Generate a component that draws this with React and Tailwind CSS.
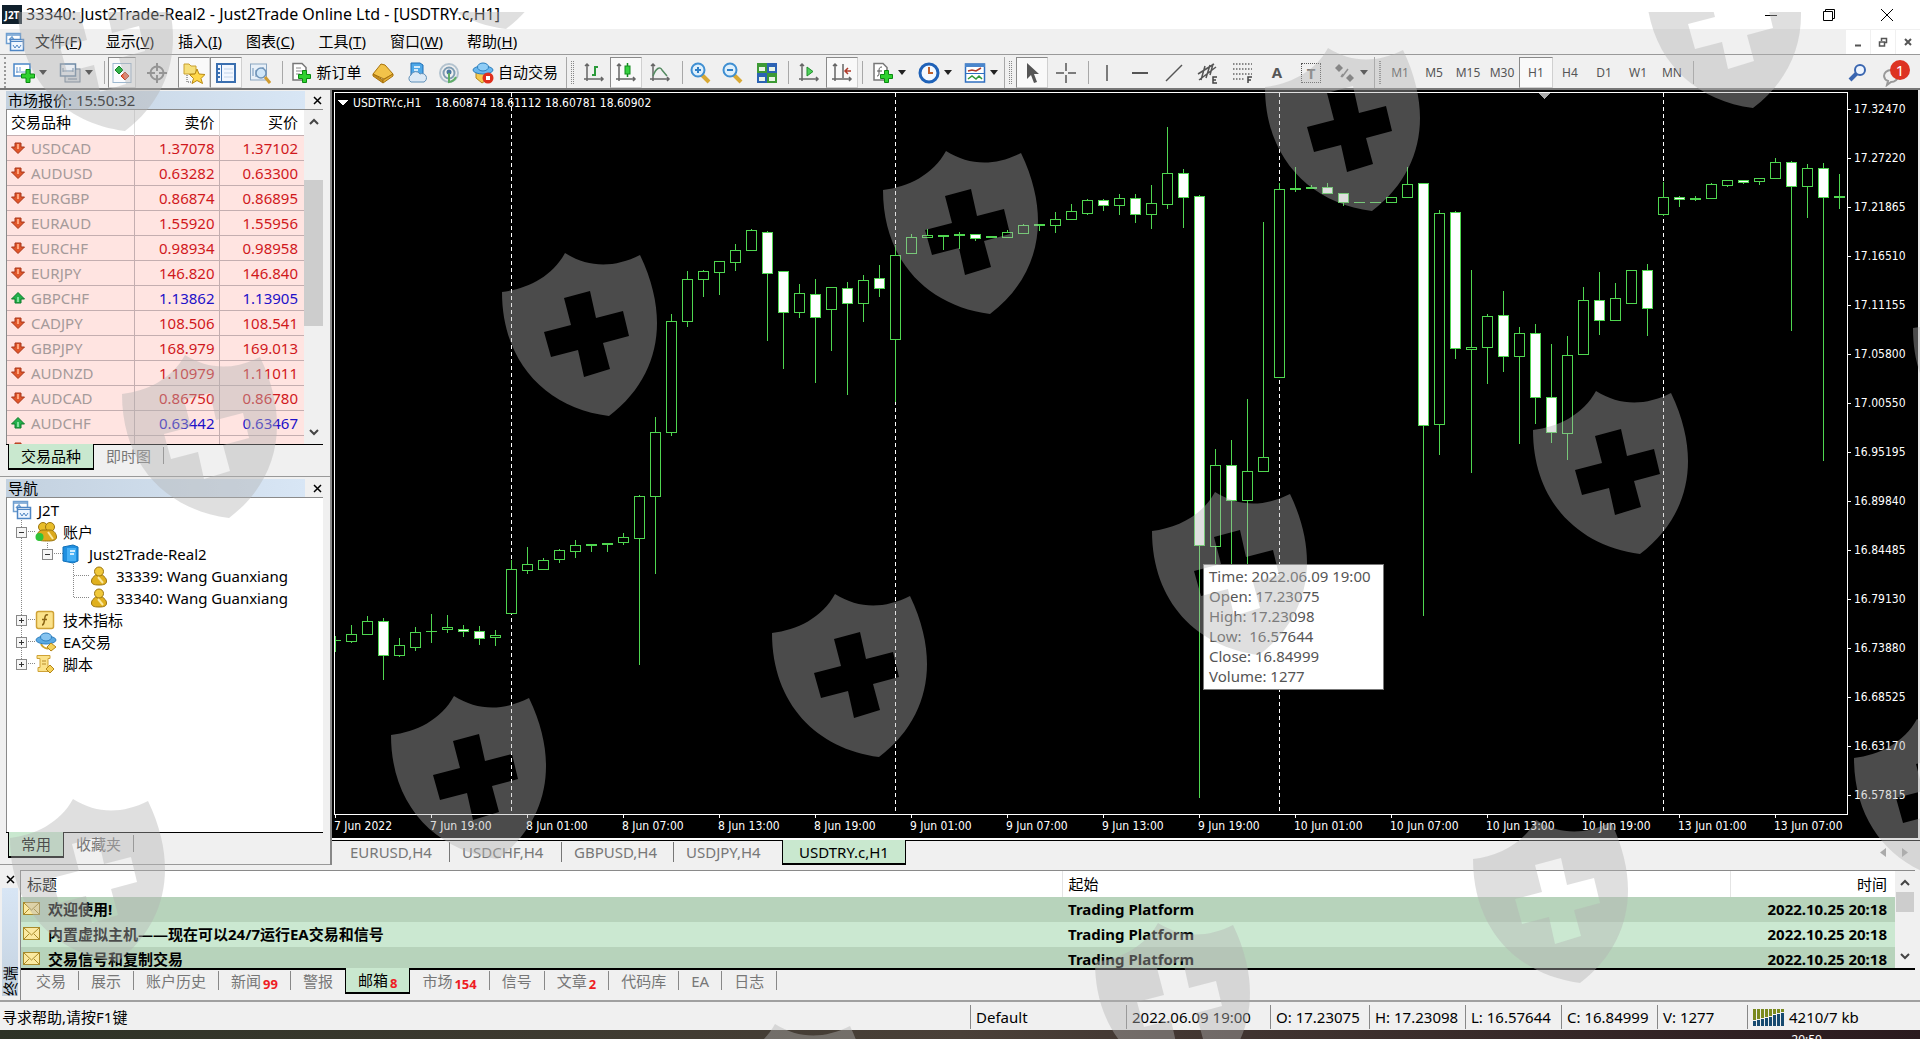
import React from 'react';
import clsx from 'clsx';

// [high, bodyTop, bodyBottom, low, kind]   h = hollow, w = filled
const CANDLES = [
  [636, 640, 640, 652, 'h'], [625, 634, 641, 643, 'h'], [616, 621, 634, 634, 'h'], [618, 621, 655, 680, 'w'],
  [638, 645, 655, 657, 'h'], [627, 632, 647, 651, 'h'], [614, 631, 631, 643, 'h'], [615, 627, 629, 633, 'h'],
  [625, 629, 631, 637, 'w'], [626, 631, 638, 645, 'w'], [630, 635, 637, 646, 'h'], [560, 569, 613, 613, 'h'],
  [547, 564, 570, 574, 'h'], [558, 560, 569, 569, 'h'], [549, 550, 559, 563, 'h'], [540, 545, 551, 558, 'h'],
  [544, 544, 545, 552, 'h'], [543, 543, 544, 552, 'h'], [533, 537, 542, 545, 'h'], [495, 496, 538, 665, 'h'],
  [417, 432, 496, 574, 'h'], [314, 321, 432, 436, 'h'], [271, 279, 321, 327, 'h'], [270, 271, 279, 297, 'h'],
  [261, 261, 272, 295, 'h'], [244, 250, 262, 271, 'h'], [229, 230, 250, 250, 'h'], [231, 232, 273, 341, 'w'],
  [271, 271, 312, 369, 'w'], [284, 293, 312, 318, 'h'], [279, 294, 317, 383, 'w'], [287, 287, 309, 351, 'h'],
  [282, 288, 303, 395, 'w'], [275, 280, 303, 322, 'h'], [265, 278, 288, 297, 'w'], [245, 255, 339, 402, 'h'],
  [234, 237, 253, 253, 'h'], [229, 235, 237, 237, 'h'], [235, 235, 236, 250, 'h'], [232, 234, 235, 249, 'h'],
  [234, 234, 238, 241, 'w'], [236, 236, 237, 237, 'h'], [230, 232, 237, 238, 'h'], [224, 225, 233, 234, 'h'],
  [224, 224, 225, 231, 'h'], [212, 219, 225, 233, 'h'], [204, 211, 219, 220, 'h'], [199, 200, 213, 215, 'h'],
  [199, 200, 205, 211, 'w'], [194, 198, 205, 215, 'h'], [194, 198, 214, 223, 'w'], [185, 203, 214, 229, 'h'],
  [127, 173, 204, 209, 'h'], [169, 173, 197, 228, 'w'], [195, 196, 545, 798, 'w'], [449, 465, 546, 580, 'h'],
  [440, 465, 500, 580, 'w'], [399, 471, 500, 580, 'h'], [222, 457, 471, 471, 'h'], [183, 189, 377, 377, 'h'],
  [167, 188, 189, 192, 'h'], [185, 187, 188, 188, 'h'], [183, 187, 193, 194, 'w'], [193, 193, 202, 206, 'w'],
  [202, 202, 202, 202, 'h'], [202, 202, 202, 202, 'h'], [197, 197, 202, 202, 'h'], [167, 184, 197, 197, 'h'],
  [183, 183, 425, 616, 'w'], [210, 213, 424, 455, 'h'], [211, 212, 348, 359, 'w'], [270, 347, 349, 473, 'h'],
  [314, 316, 347, 384, 'h'], [291, 315, 356, 372, 'w'], [327, 333, 356, 444, 'h'], [324, 333, 397, 424, 'w'],
  [344, 397, 432, 443, 'w'], [336, 355, 433, 460, 'h'], [287, 300, 354, 354, 'h'], [272, 300, 320, 335, 'w'],
  [283, 298, 320, 321, 'h'], [270, 270, 303, 303, 'h'], [264, 270, 308, 336, 'w'], [182, 197, 214, 216, 'h'],
  [196, 197, 199, 207, 'w'], [196, 198, 199, 201, 'h'], [183, 184, 198, 198, 'h'], [180, 180, 185, 187, 'h'],
  [180, 180, 182, 184, 'w'], [178, 178, 181, 185, 'h'], [158, 162, 178, 178, 'h'], [161, 162, 186, 331, 'w'],
  [164, 168, 186, 218, 'h'], [163, 168, 197, 461, 'w'], [174, 196, 197, 209, 'h'],
];
const DAY_BREAKS = [11, 35, 59, 83];
const STEP = 16;
const TOP = 93;

const PRICES = [
  '17.32470', '17.27220', '17.21865', '17.16510', '17.11155', '17.05800', '17.00550', '16.95195',
  '16.89840', '16.84485', '16.79130', '16.73880', '16.68525', '16.63170', '16.57815',
];
const TIMES = [
  '7 Jun 2022', '7 Jun 19:00', '8 Jun 01:00', '8 Jun 07:00', '8 Jun 13:00', '8 Jun 19:00', '9 Jun 01:00', '9 Jun 07:00',
  '9 Jun 13:00', '9 Jun 19:00', '10 Jun 01:00', '10 Jun 07:00', '10 Jun 13:00', '10 Jun 19:00', '13 Jun 01:00', '13 Jun 07:00',
];

const QUOTES = [
  ['USDCAD', '1.37078', '1.37102'],
  ['AUDUSD', '0.63282', '0.63300'],
  ['EURGBP', '0.86874', '0.86895'],
  ['EURAUD', '1.55920', '1.55956'],
  ['EURCHF', '0.98934', '0.98958'],
  ['EURJPY', '146.820', '146.840'],
  ['GBPCHF', '1.13862', '1.13905', true],
  ['CADJPY', '108.506', '108.541'],
  ['GBPJPY', '168.979', '169.013'],
  ['AUDNZD', '1.10979', '1.11011'],
  ['AUDCAD', '0.86750', '0.86780'],
  ['AUDCHF', '0.63442', '0.63467', true],
  ['AUDJPY', '94.443', '94.476'],
];

const MENUS = [['文件', 'F'], ['显示', 'V'], ['插入', 'I'], ['图表', 'C'], ['工具', 'T'], ['窗口', 'W'], ['帮助', 'H']];

const CHART_TABS = ['EURUSD,H4', 'USDCHF,H4', 'GBPUSD,H4', 'USDJPY,H4'];

const MAILS = ['欢迎使用!', '内置虚拟主机——现在可以24/7运行EA交易和信号', '交易信号和复制交易'];

const TERMINAL_TABS = [
  ['交易'], ['展示'], ['账户历史'], ['新闻', 99], ['警报'], ['邮箱', 8], ['市场', 154], ['信号'], ['文章', 2], ['代码库'], ['EA'], ['日志'],
];

const SHIELDS = [
  [18, -32], [399, -134], [1646, -55], [1265, 48], [883, 151], [502, 253], [122, 355], [1533, 391], [1913, 289],
  [1152, 492], [772, 594], [391, 696], [10, 799], [1854, 719], [1473, 820], [1095, 923], [712, 1024],
];

/* ---------- icons ---------- */

function Svg({ w = 22, h = 22, children }) {
  return (
    <svg width={w} height={h} viewBox={`0 0 ${w} ${h}`} fill="none" className="shrink-0" aria-hidden="true">
      {children}
    </svg>
  );
}

function Plus() {
  return (
    <path
      transform="translate(8 8)"
      d="M4.5.5h4v4h4v4h-4v4h-4v-4h-4v-4h4z"
      fill="#2fd12f"
      stroke="#0b8a12"
    />
  );
}

function Caret() {
  return (
    <svg width="8" height="5" viewBox="0 0 8 5" className="shrink-0" aria-hidden="true">
      <path d="M0 0h8L4 5z" fill="#222" />
    </svg>
  );
}

function Axes() {
  return <path d="M4 2v17M1 17h19M2 4l2-2 2 2M18 15l2 2-2 2" stroke="#666" strokeWidth="1.5" />;
}

function WindowsIcon() {
  return (
    <Svg w={20} h={20}>
      <rect x="1.5" y="1.5" width="14" height="10" fill="#fff" stroke="#6f9fd0" strokeWidth="1.5" />
      <path d="M1 3h15M4 8l3-3 2 3" stroke="#6f9fd0" strokeWidth="1.5" />
      <rect x="5.5" y="7.5" width="13" height="11" fill="#eef6ff" stroke="#4f86c4" strokeWidth="1.5" />
      <path d="M5 9.5h14M8 13l2 3 2-3 2 3 2-3" stroke="#4f86c4" />
    </Svg>
  );
}

const Icons = {
  newChart: (
    <Svg>
      <rect x="1" y="2" width="16" height="12" fill="#fff" stroke="#4a86c8" strokeWidth="1.5" />
      <path d="M4 5v6M3 10h10M7 5v4" stroke="#6a9bd0" />
      <path d="M13 7.5h4v4.500h4.500v4H17v4.500h-4V16H8.500v-4H13z" fill="#2fd12f" stroke="#0b8a12" />
    </Svg>
  ),
  profiles: (
    <Svg>
      <rect x="6" y="7" width="15" height="13" fill="#d7dce2" stroke="#6d7f92" />
      <rect x="1.5" y="2" width="15" height="12" fill="#e9edf2" stroke="#6f8aa6" strokeWidth="1.5" />
      <path d="M4 9h10M4 6v4M14 6v4" stroke="#7d93aa" />
      <path d="M9 17h9" stroke="#6d7f92" />
    </Svg>
  ),
  market: (
    <Svg>
      <rect x="2" y="1.5" width="18" height="19" fill="#fafcff" stroke="#9db8d0" />
      <path d="M8 4l4 4-4 4-4-4z" fill="#33b44a" stroke="#15802a" />
      <path d="M14 10l4 4-4 4-4-4z" fill="#ef6a4a" stroke="#c03a20" />
    </Svg>
  ),
  dataWindow: (
    <Svg>
      <circle cx="11" cy="11" r="6.5" stroke="#808080" strokeWidth="2" />
      <path d="M11 1v8M11 13v8M1 11h8M13 11h8" stroke="#808080" strokeWidth="2" />
    </Svg>
  ),
  navigator: (
    <Svg>
      <path d="M1 2h5l2 2h5v8H1z" fill="#f6df7a" stroke="#c8a030" />
      <path d="M4 13v7h6" stroke="#555" strokeDasharray="1 1" />
      <path d="M14 7l2 5 6 .5-4 4 1.5 5-5.500-3-5 3 1.500-5-4-4 5.500-.5z" fill="#ffd84a" stroke="#b98a12" />
    </Svg>
  ),
  terminal: (
    <Svg>
      <rect x="2" y="2" width="18" height="18" fill="#f2f7ff" stroke="#3a6fb0" strokeWidth="2" />
      <path d="M6.5 3v16" stroke="#3a6fb0" />
      <path d="M3 7h2M3 11h2M3 15h2" stroke="#3a6fb0" strokeWidth="2" />
      <path d="M9 7h9M9 11h9M9 15h9" stroke="#c3d4ea" />
    </Svg>
  ),
  tester: (
    <Svg>
      <rect x="1.5" y="2" width="16" height="16" fill="#e8f0f8" stroke="#8aa5c0" />
      <path d="M4 14V6M7 15V8M14 12V5" stroke="#6f93b8" />
      <circle cx="12" cy="11" r="5" fill="#cfe6f8" stroke="#6f93b8" strokeWidth="1.5" />
      <path d="M16 15l5 6" stroke="#cf9b30" strokeWidth="3" />
    </Svg>
  ),
  order: (
    <Svg>
      <path d="M3 1.5h9l4 4V18H3z" fill="#fff" stroke="#777" strokeWidth="1.5" />
      <path d="M6 6h5M6 9h7M6 12h4" stroke="#888" />
      <Plus />
    </Svg>
  ),
  metaEditor: (
    <Svg>
      <path d="M1 12L9 2l4 1 8 9-9 5z" fill="#f2c34a" stroke="#a8730c" />
      <path d="M1 12l10 6v3L1 14z" fill="#c98f1e" stroke="#a8730c" />
      <path d="M11 18l10-6v2l-10 7z" fill="#e5b03a" stroke="#a8730c" />
    </Svg>
  ),
  vps: (
    <Svg>
      <path d="M5 1h9l3 2v10H5z" fill="#4fa8e8" stroke="#1f6fb5" />
      <path d="M8 5h6M8 8h4" stroke="#fff" strokeWidth="1.5" />
      <path d="M5 20a4 4 0 010-7 5 5 0 019-1 4 4 0 014 8z" fill="#dce9f5" stroke="#5f8fb8" />
    </Svg>
  ),
  signals: (
    <Svg>
      <circle cx="11" cy="11" r="9" stroke="#b3c3cf" strokeWidth="2" />
      <circle cx="11" cy="11" r="5.5" stroke="#7f9db3" strokeWidth="2" />
      <circle cx="11" cy="10" r="2.5" fill="#4a78a0" />
      <path d="M11 11v9a9 9 0 007-5" stroke="#5fae68" strokeWidth="2" />
    </Svg>
  ),
  expert: (
    <Svg>
      <path d="M4 10h14l-2 7-6 4-6-5z" fill="#f4c94e" stroke="#b5861a" />
      <ellipse cx="11" cy="8" rx="10" ry="4" fill="#6ab7ee" stroke="#2b7fbe" />
      <ellipse cx="11" cy="5" rx="5.5" ry="4" fill="#8fcdf6" stroke="#2b7fbe" />
      <circle cx="16" cy="16" r="5.5" fill="#e0301e" />
      <rect x="14" y="14" width="4" height="4" fill="#fff" />
    </Svg>
  ),
  bars: (
    <Svg>
      <Axes />
      <path d="M12 4v10M12 5h3M9 13h3" stroke="#2b9a3a" strokeWidth="2" />
    </Svg>
  ),
  candles: (
    <Svg>
      <Axes />
      <path d="M12.5 1v14" stroke="#128a1e" strokeWidth="1.5" />
      <rect x="10" y="4" width="5" height="8" fill="#35d13f" stroke="#128a1e" />
    </Svg>
  ),
  line: (
    <Svg>
      <Axes />
      <path d="M4 14c3-8 7-10 9-6l5 6" stroke="#558b62" strokeWidth="1.5" />
    </Svg>
  ),
  zoomIn: (
    <Svg>
      <path d="M13 13l7 7" stroke="#d9a934" strokeWidth="4" />
      <circle cx="9" cy="8" r="6.5" fill="#dff0fc" stroke="#3f8fd2" strokeWidth="2" />
      <path d="M9 5v6M6 8h6" stroke="#2f7fc6" strokeWidth="2" />
    </Svg>
  ),
  zoomOut: (
    <Svg>
      <path d="M13 13l7 7" stroke="#d9a934" strokeWidth="4" />
      <circle cx="9" cy="8" r="6.5" fill="#dff0fc" stroke="#3f8fd2" strokeWidth="2" />
      <path d="M6 8h6" stroke="#2f7fc6" strokeWidth="2" />
    </Svg>
  ),
  tile: (
    <Svg>
      <rect x="1" y="1" width="10" height="10" fill="#3d9a35" />
      <rect x="11" y="1" width="10" height="10" fill="#2c63b4" />
      <rect x="1" y="11" width="10" height="10" fill="#2c63b4" />
      <rect x="11" y="11" width="10" height="10" fill="#3d9a35" />
      <path d="M3 5h6v4H3zM13 5h6v4h-6zM3 15h6v4H3zM13 15h6v4h-6z" fill="#e9f4e6" />
    </Svg>
  ),
  autoScroll: (
    <Svg>
      <Axes />
      <path d="M9 5l6 4.500L9 14z" fill="#4fd05a" stroke="#1e8f2b" />
    </Svg>
  ),
  shift: (
    <Svg>
      <Axes />
      <path d="M12 2v14" stroke="#666" strokeWidth="1.5" />
      <path d="M20 9h-6M17 6l-3 3 3 3" stroke="#b03a2a" strokeWidth="1.5" />
    </Svg>
  ),
  indicators: (
    <Svg>
      <path d="M2 1.5h9l4 4V18H2z" fill="#fff" stroke="#777" strokeWidth="1.5" />
      <path d="M10 5c-3 0-3 2-3 5s0 4-2 4M5 9h5" stroke="#555" />
      <Plus />
    </Svg>
  ),
  clock: (
    <Svg>
      <circle cx="11" cy="11" r="9" fill="#f4f9ff" stroke="#1f62b8" strokeWidth="3" />
      <path d="M11 5v6h4" stroke="#c0602a" strokeWidth="2" />
    </Svg>
  ),
  templates: (
    <Svg>
      <rect x="1.5" y="2" width="19" height="18" fill="#fff" stroke="#2f6fc0" strokeWidth="1.5" />
      <path d="M1 3.5h20" stroke="#4a86cc" strokeWidth="3" />
      <path d="M4 9l4-1 4 1 5-3" stroke="#b03a2a" strokeWidth="1.5" />
      <path d="M2 11.5h18" stroke="#2f6fc0" />
      <path d="M4 17l4-3 4 3 3-3 3 3" stroke="#2f9a3a" strokeWidth="1.5" />
    </Svg>
  ),
  cursor: (
    <Svg>
      <path d="M6 1v16l4-4 3 8 3-1-3-8h5z" fill="#555" />
    </Svg>
  ),
  crosshair: (
    <Svg>
      <path d="M11 1v8M11 13v8M1 11h8M13 11h8" stroke="#555" strokeWidth="1.5" />
    </Svg>
  ),
  vline: <Svg><path d="M11 3v16" stroke="#555" strokeWidth="1.5" /></Svg>,
  hline: <Svg><path d="M3 11h16" stroke="#555" strokeWidth="2" /></Svg>,
  trend: <Svg><path d="M3 19L19 3" stroke="#555" strokeWidth="1.5" /></Svg>,
  channel: (
    <Svg>
      <path d="M1 12L17 2M2 18L19 5M4 18l4-14M9 16l4-13M13 13l3-11" stroke="#555" strokeWidth="1.5" />
      <path d="M20 15h-4v6h4M16 18h3" stroke="#444" strokeWidth="1.5" />
    </Svg>
  ),
  fibo: (
    <Svg>
      <path d="M1 2h19M1 7h19M1 12h19M1 17h11" stroke="#666" strokeWidth="1.5" strokeDasharray="1.5 1.5" />
      <path d="M20 15h-4v6M16 18h3" stroke="#444" strokeWidth="1.5" />
    </Svg>
  ),
  arrows: (
    <Svg>
      <path d="M5 2l4 4-4 4-4-4zM16 12l4 4-4 4-4-4z" fill="#666" />
      <path d="M8 15l6-8M9 12l-2 3" stroke="#777" strokeWidth="1.5" />
    </Svg>
  ),
};

function QuoteArrow({ up }) {
  return (
    <svg width="14" height="14" viewBox="0 0 14 14" className={clsx('shrink-0', up && 'rotate-180')} aria-hidden="true">
      <path
        d="M4 2h6v4h3.500L7 12.500.5 6H4z"
        fill={up ? '#22b04a' : '#e0562a'}
        stroke={up ? '#0c7a2a' : '#a8371a'}
      />
      <path d="M6 3h2v5H6z" fill={up ? '#7fe09a' : '#ffa47c'} />
    </svg>
  );
}

function Person() {
  return (
    <Svg w={18} h={20}>
      <path d="M1.5 15c0-3 2-4 4-6h7c2 2 4 3 4 6s-2 4-7.500 4-7.500-1-7.500-4z" fill="#e0b01e" stroke="#9a7410" />
      <circle cx="9" cy="5.5" r="4.5" fill="#f0c83a" stroke="#9a7410" />
      <path d="M8 11l5 6" stroke="#fbe9a0" strokeWidth="2" />
    </Svg>
  );
}

function People() {
  return (
    <Svg w={22} h={20}>
      <circle cx="8" cy="5" r="4.5" fill="#e8bd2a" stroke="#9a7410" />
      <circle cx="15" cy="5" r="4.5" fill="#e8bd2a" stroke="#9a7410" />
      <path d="M2 16c0-5 2-8 6-8h7c4 0 6.500 4 6.500 7s-3 4-8 4-11.500 0-11.500-3z" fill="#dca91c" stroke="#9a7410" />
      <path d="M13 10l5 7" stroke="#fbe9a0" strokeWidth="2" />
      <circle cx="4.5" cy="15" r="4" fill="#2fc43a" />
    </Svg>
  );
}

function Server() {
  return (
    <Svg w={18} h={20}>
      <path d="M1 3l10-2 5 2v14l-5 2-10-2z" fill="#1f8fe0" stroke="#1070b8" />
      <path d="M5 4h9v13H5z" fill="#46b0f5" />
      <path d="M8 7h5M8 10h4" stroke="#fff" strokeWidth="1.5" />
    </Svg>
  );
}

function FuncIcon() {
  return (
    <Svg w={20} h={20}>
      <rect x="1.5" y="1.5" width="17" height="17" rx="2" fill="#fbe28a" stroke="#cfa236" strokeWidth="1.5" />
      <path d="M13 5c-3-1-3 2-3.500 5S9 15 7 15M7 9.500h5" stroke="#8a6414" strokeWidth="1.5" />
    </Svg>
  );
}

function HatIcon() {
  return (
    <Svg w={22} h={20}>
      <path d="M6 12c2 4 6 5 9 4" stroke="#d0a22c" strokeWidth="2" />
      <ellipse cx="11" cy="8" rx="10" ry="4" fill="#5aa9e2" stroke="#2f7fbe" />
      <ellipse cx="11" cy="5" rx="5.5" ry="4" fill="#86c4f0" stroke="#2f7fbe" />
      <path d="M16 11l5 4-5 4-4-4z" fill="#f5d25a" stroke="#b5861a" />
    </Svg>
  );
}

function ScriptIcon() {
  return (
    <Svg w={20} h={20}>
      <path d="M2 1.500h13v3h-2v9h2v4H3v-4h2v-9H2z" fill="#fbe28a" stroke="#cfa236" />
      <path d="M7 7h4M7 10h4" stroke="#b58a2a" />
      <path d="M15 11l4 4-4 4-4-4z" fill="#f5d25a" stroke="#b5861a" />
    </Svg>
  );
}

function Envelope() {
  return (
    <Svg w={17} h={13}>
      <rect x=".5" y=".5" width="16" height="12" fill="#fbe9a0" stroke="#a88a2a" />
      <path d="M1 1l7.500 7L16 1M1 12l5-5M16 12l-5-5" stroke="#a88a2a" />
    </Svg>
  );
}

function Cross() {
  return (
    <svg width="9" height="9" viewBox="0 0 9 9" aria-hidden="true">
      <path d="M1 1l7 7M8 1L1 8" stroke="#000" strokeWidth="1.5" />
    </svg>
  );
}

/* ---------- toolbar ---------- */

function Sep() {
  return (
    <span className="flex w-2 justify-center self-stretch py-1">
      <span className="w-px bg-[#a8a8a8]" />
    </span>
  );
}

function Grip({ className }) {
  return (
    <span className={clsx('flex items-stretch justify-between self-stretch border-l border-[#a8a8a8] px-1 py-1', className)}>
      <span className="w-1 border-x border-dotted border-[#888]" />
    </span>
  );
}

function ToolButton({ label, pressed, className, children }) {
  return (
    <button
      type="button"
      aria-label={label}
      className={clsx(
        'flex h-[31px] shrink-0 items-center justify-center gap-1 text-[15px]',
        pressed && 'border border-[#d0d0d0] border-t-[#8a8a8a] border-l-[#8a8a8a] bg-[#f9f9f9]',
        className
      )}
    >
      {children}
    </button>
  );
}

function Toolbar() {
  return (
    <div className="flex h-9 shrink-0 items-center overflow-hidden border-t border-b-2 border-t-[#9a9a9a] border-b-[#777] bg-[#f0f0f0] pt-0.5">
      <span className="ml-1 w-1 self-stretch border-l-2 border-dotted border-[#999]" />
      <ToolButton label="新图表" className="w-11">{Icons.newChart}<Caret /></ToolButton>
      <ToolButton label="配置文件" className="w-12">{Icons.profiles}<Caret /></ToolButton>
      <Sep />
      <ToolButton label="市场报价" pressed className="w-7">{Icons.market}</ToolButton>
      <ToolButton label="数据窗口" className="w-[42px]">{Icons.dataWindow}</ToolButton>
      <ToolButton label="导航" pressed className="w-8">{Icons.navigator}</ToolButton>
      <ToolButton label="终端" pressed className="w-8">{Icons.terminal}</ToolButton>
      <ToolButton label="策略测试" className="w-9">{Icons.tester}</ToolButton>
      <Sep />
      <ToolButton label="新订单" className="w-20">{Icons.order}新订单</ToolButton>
      <ToolButton label="编辑器" className="w-[34px]">{Icons.metaEditor}</ToolButton>
      <ToolButton label="VPS" className="w-[34px]">{Icons.vps}</ToolButton>
      <ToolButton label="信号" className="w-[30px]">{Icons.signals}</ToolButton>
      <ToolButton label="自动交易" className="w-[102px]">{Icons.expert}自动交易</ToolButton>
      <Grip className="w-3" />
      <ToolButton label="柱状图" className="w-8">{Icons.bars}</ToolButton>
      <ToolButton label="蜡烛图" pressed className="w-8">{Icons.candles}</ToolButton>
      <ToolButton label="线图" className="w-9">{Icons.line}</ToolButton>
      <Sep />
      <ToolButton label="放大" className="w-7">{Icons.zoomIn}</ToolButton>
      <ToolButton label="缩小" className="w-9">{Icons.zoomOut}</ToolButton>
      <ToolButton label="平铺" className="w-[34px]">{Icons.tile}</ToolButton>
      <Sep />
      <ToolButton label="自动滚动" className="w-[34px]">{Icons.autoScroll}</ToolButton>
      <ToolButton label="图表平移" pressed className="w-8">{Icons.shift}</ToolButton>
      <Sep />
      <ToolButton label="技术指标" className="w-[46px]">{Icons.indicators}<Caret /></ToolButton>
      <ToolButton label="周期" className="w-[46px]">{Icons.clock}<Caret /></ToolButton>
      <ToolButton label="模板" className="w-[46px]">{Icons.templates}<Caret /></ToolButton>
      <Grip className="w-3" />
      <ToolButton label="光标" pressed className="w-8">{Icons.cursor}</ToolButton>
      <ToolButton label="十字线" className="w-9">{Icons.crosshair}</ToolButton>
      <Sep />
      <ToolButton label="垂直线" className="w-[30px]">{Icons.vline}</ToolButton>
      <ToolButton label="水平线" className="w-9">{Icons.hline}</ToolButton>
      <ToolButton label="趋势线" className="w-8">{Icons.trend}</ToolButton>
      <ToolButton label="通道" className="w-9">{Icons.channel}</ToolButton>
      <ToolButton label="斐波那契" className="w-[34px]">{Icons.fibo}</ToolButton>
      <ToolButton label="文字" className="w-[34px] font-bold text-[#555]">A</ToolButton>
      <ToolButton label="文字标签" className="w-[34px]">
        <span className="h-5 w-5 border border-dotted border-[#555] text-center leading-[18px] font-bold text-[#777]">T</span>
      </ToolButton>
      <ToolButton label="箭头" className="w-[46px]">{Icons.arrows}<Caret /></ToolButton>
      <Grip className="w-2" />
      {['M1', 'M5', 'M15', 'M30', 'H1', 'H4', 'D1', 'W1', 'MN'].map((tf) => (
        <button
          key={tf}
          type="button"
          className={clsx(
            'h-[31px] w-[34px] shrink-0 text-xs text-[#555]',
            tf === 'H1' && 'border border-[#d0d0d0] border-t-[#8a8a8a] border-l-[#8a8a8a] bg-[#f9f9f9]'
          )}
        >
          {tf}
        </button>
      ))}
      <Sep />
      <div className="ml-auto flex items-center gap-3 pr-2">
        <button type="button" aria-label="搜索">
          <Svg>
            <path d="M11 11l-7 7" stroke="#3a66b0" strokeWidth="4" />
            <circle cx="14" cy="8" r="5" fill="#eef5ff" stroke="#3a66b0" strokeWidth="2" />
          </Svg>
        </button>
        <button type="button" aria-label="通知" className="relative h-7 w-8">
          <svg width="32" height="28" viewBox="0 0 32 28" fill="none" aria-hidden="true">
            <path d="M4 17a7 6 0 117 6l-4 3 1-4a6 6 0 01-4-5z" stroke="#999" strokeWidth="2" />
            <circle cx="20" cy="11" r="10" fill="#dd3322" />
          </svg>
          <span className="absolute top-0 right-0 w-6 text-center text-[15px] leading-[22px] text-white">1</span>
        </button>
      </div>
    </div>
  );
}

/* ---------- left panels ---------- */

function PanelHeader({ title }) {
  return (
    <div className="flex h-[18px] items-center justify-between">
      <div className="h-full flex-1 bg-linear-to-r from-[#c3d1df] to-[#d8e6f5] pl-0.5 text-[15px] leading-[18px]">{title}</div>
      <button type="button" aria-label="关闭" className="ml-1.5 flex w-3 justify-center">
        <Cross />
      </button>
    </div>
  );
}

function PanelTabs({ active, other }) {
  return (
    <div className="flex h-[26px] border-t border-black pl-0.5">
      <button type="button" className="-mt-px h-[26px] border border-t-0 border-b-2 border-black bg-[#c9e8cf] px-3 text-[15px] leading-[22px]">{active}</button>
      <button type="button" className="mt-0.5 mb-1.5 border-r border-[#888] px-3 text-[15px] leading-4 text-[#777]">{other}</button>
    </div>
  );
}

function Chevron({ down }) {
  return (
    <svg width="10" height="7" viewBox="0 0 10 7" fill="none" className={clsx('shrink-0', down && 'rotate-180')} aria-hidden="true">
      <path d="M1 6l4-4 4 4" stroke="#444" strokeWidth="2" />
    </svg>
  );
}

function MarketWatch() {
  return (
    <section className="flex flex-col border-b border-[#999] pt-px pr-[7px] pb-1.5 pl-1.5">
      <PanelHeader title="市场报价: 15:50:32" />
      <div className="flex h-[335px] overflow-hidden border-t border-l border-[#8a8a8a] bg-white">
        <div className="flex-1 overflow-hidden">
          <table className="w-full table-fixed border-collapse text-[15px]">
            <thead>
              <tr className="h-[25px]">
                <th className="w-[127px] border-r border-[#ddd] pl-1 text-left leading-5 font-normal">交易品种</th>
                <th className="border-r border-[#ddd] pr-1 text-right leading-5 font-normal">卖价</th>
                <th className="pr-1.5 text-right leading-5 font-normal">买价</th>
              </tr>
            </thead>
            <tbody>
              {QUOTES.map(([name, bid, ask, up]) => (
                <tr key={name} className="h-[25px] border-t border-[#c4aeb0] bg-[#ffe4e1]">
                  <td className="border-r border-[#c4aeb0] pl-1 leading-5">
                    <span className="flex items-center gap-1.5 text-[#a59a9a]"><QuoteArrow up={up} />{name}</span>
                  </td>
                  <td className={clsx('border-r border-[#c4aeb0] pr-1 text-right leading-5', up ? 'text-[#2210c8]' : 'text-[#d0181c]')}>{bid}</td>
                  <td className={clsx('pr-1.5 text-right leading-5', up ? 'text-[#2210c8]' : 'text-[#d0181c]')}>{ask}</td>
                </tr>
              ))}
            </tbody>
          </table>
        </div>
        <div className="flex w-[19px] flex-col items-center justify-between bg-[#f0f0f0] py-2">
          <Chevron />
          <span className="mt-[55px] mb-auto h-[146px] w-full bg-[#cdcdcd]" />
          <Chevron down />
        </div>
      </div>
      <PanelTabs active="交易品种" other="即时图" />
    </section>
  );
}

function Expander({ open }) {
  return (
    <svg width="11" height="11" viewBox="0 0 11 11" className="shrink-0" aria-hidden="true">
      <rect x=".5" y=".5" width="10" height="10" fill="#f6f6f6" stroke="#888" />
      <path d={open ? 'M3 5.500h5' : 'M3 5.500h5M5.500 3v5'} stroke="#333" />
    </svg>
  );
}

function Navigator() {
  return (
    <section className="mt-0.5 flex flex-1 flex-col border-b border-[#999] pr-[7px] pb-1.5 pl-1.5">
      <PanelHeader title="导航" />
      <div className="relative flex-1 border-t border-l border-[#8a8a8a] bg-white text-[15px]">
        <svg width="110" height="180" className="absolute top-0 left-0" aria-hidden="true">
          <path
            d="M14.500 20v146M15 33.500h14M40.500 45v11M41 55.500h16M66.500 66v33M67 77.500h16M67 99.500h16M15 121.500h14M15 143.500h14M15 165.500h14"
            stroke="#888"
            fill="none"
            strokeDasharray="1 1"
          />
        </svg>
        <ul className="relative pt-px leading-[22px]">
          <li className="flex h-[22px] items-center gap-1.5 pl-[5px]"><WindowsIcon />J2T</li>
          <li className="flex h-[22px] items-center pl-[9px]"><Expander open /><span className="mr-1.5 ml-2"><People /></span>账户</li>
          <li className="flex h-[22px] items-center pl-[35px]"><Expander open /><span className="mx-[9px]"><Server /></span>Just2Trade-Real2</li>
          <li className="flex h-[22px] items-center gap-2 pl-[83px]"><Person />33339: Wang Guanxiang</li>
          <li className="flex h-[22px] items-center gap-2 pl-[83px]"><Person />33340: Wang Guanxiang</li>
          <li className="flex h-[22px] items-center pl-[9px]"><Expander /><span className="mx-2"><FuncIcon /></span>技术指标</li>
          <li className="flex h-[22px] items-center pl-[9px]"><Expander /><span className="mr-1.5 ml-2"><HatIcon /></span>EA交易</li>
          <li className="flex h-[22px] items-center pl-[9px]"><Expander /><span className="mx-2"><ScriptIcon /></span>脚本</li>
        </ul>
      </div>
      <PanelTabs active="常用" other="收藏夹" />
    </section>
  );
}

/* ---------- chart ---------- */

function Candle({ i, data }) {
  const [high, top, bottom, low, kind] = data;
  const x = i * STEP;
  return (
    <g>
      <rect x={x} y={high - TOP} width="1" height={Math.max(low - high, 1)} fill="#4fd650" />
      {bottom - top < 2 ? (
        <rect x={x - 5} y={top - TOP} width="11" height={bottom - top + 1} fill="#4fd650" />
      ) : (
        <rect x={x - 4.5} y={top - TOP + 0.5} width="10" height={bottom - top} fill={kind === 'w' ? '#fff' : '#000'} stroke="#4fd650" />
      )}
    </g>
  );
}

function Chart() {
  return (
    <div className="flex min-h-0 flex-1 flex-col border-r-2 border-[#e8e8e8] bg-black pt-0.5 pl-0.5 font-['DejaVu_Sans_Condensed','Noto_Sans',sans-serif] text-xs text-white">
      <div className="flex min-h-0 flex-1">
        <div className="relative min-w-0 flex-1 overflow-hidden border border-white">
          <svg className="absolute inset-0 h-full w-full" shapeRendering="crispEdges" aria-hidden="true">
            {DAY_BREAKS.map((i) => (
              <line key={i} x1={i * STEP + 0.5} x2={i * STEP + 0.5} y1="0" y2="100%" stroke="#fff" strokeDasharray="4 3" />
            ))}
            {CANDLES.map((c, i) => (
              <Candle key={i} i={i} data={c} />
            ))}
            <path d="M1203 0h12l-6 6z" fill="#aaa" />
            <path d="M3 7h10l-5 6z" fill="#fff" />
          </svg>
          <div className="relative pt-px pl-[18px] leading-[18px] whitespace-pre">USDTRY.c,H1    18.60874 18.61112 18.60781 18.60902</div>
          <div className="absolute top-[471px] left-[868px] w-[181px] border border-[#777] bg-white pt-px pb-[3px] pl-[5px] font-['Noto_Sans',sans-serif] text-[15px] leading-5 whitespace-pre text-[#555]">
            <p>Time: 2022.06.09 19:00</p>
            <p>Open: 17.23075</p>
            <p>High: 17.23098</p>
            <p>Low:  16.57644</p>
            <p>Close: 16.84999</p>
            <p>Volume: 1277</p>
          </div>
        </div>
        <ul className="w-[70px] shrink-0 overflow-hidden pt-2">
          {PRICES.map((p) => (
            <li key={p} className="flex h-[49px] items-start leading-[18px]">
              <span className="mt-[9px] mr-[3px] h-px w-[3px] bg-white" />
              {p}
            </li>
          ))}
        </ul>
      </div>
      <ul className="flex h-[23px] shrink-0 overflow-hidden">
        {TIMES.map((t) => (
          <li key={t} className="w-24 shrink-0 whitespace-nowrap">
            <span className="ml-px block h-[3px] w-px bg-white" />
            <span className="block leading-4">{t}</span>
          </li>
        ))}
      </ul>
    </div>
  );
}

function ChartTabs() {
  return (
    <div className="flex h-8 shrink-0 flex-col border-t-2 border-white">
      <div className="flex h-6 border-t border-black pl-1.5">
        {CHART_TABS.map((t, i) => (
          <button
            key={t}
            type="button"
            className={clsx(
              'mt-px mb-0.5 pl-3 text-left text-[15px] leading-5 text-[#777]',
              i < CHART_TABS.length - 1 ? 'w-28 border-r border-[#777]' : 'w-27'
            )}
          >
            {t}
          </button>
        ))}
        <button type="button" className="-mt-px h-[25px] w-[124px] border border-t-0 border-b-2 border-black bg-[#c9e8cf] text-[15px] leading-5">
          USDTRY.c,H1
        </button>
        <div className="ml-auto flex items-center gap-4 pr-3">
          <svg width="6" height="9" viewBox="0 0 6 9" aria-hidden="true"><path d="M6 0v9L0 4.500z" fill="#aaa" /></svg>
          <svg width="6" height="9" viewBox="0 0 6 9" aria-hidden="true"><path d="M0 0v9l6-4.500z" fill="#aaa" /></svg>
        </div>
      </div>
    </div>
  );
}

/* ---------- bottom ---------- */

function Terminal() {
  return (
    <section className="flex h-[130px] shrink-0 pr-[5px]">
      <div className="flex w-5 shrink-0 flex-col items-center pb-1">
        <button type="button" aria-label="关闭" className="flex h-[18px] items-center">
          <Cross />
        </button>
        <div className="w-4 flex-1 rotate-180 bg-linear-to-b from-[#c3d1df] to-[#d8e6f5] text-[15px] leading-4 [text-orientation:sideways] [writing-mode:vertical-rl]">终端</div>
      </div>
      <div className="flex min-w-0 flex-1 flex-col border-t border-l border-[#8a8a8a]">
        <div className="flex h-[97px] overflow-hidden bg-white">
          <div className="min-w-0 flex-1">
            <table className="w-full table-fixed border-collapse text-[15px]">
              <thead>
                <tr className="h-[26px]">
                  <th className="border-r border-[#e4e4e4] pl-1.5 text-left leading-5 font-normal">标题</th>
                  <th className="w-[668px] border-r border-[#e4e4e4] pl-1.5 text-left leading-5 font-normal">起始</th>
                  <th className="w-[165px] pr-2 text-right leading-5 font-normal">时间</th>
                </tr>
              </thead>
              <tbody>
                {MAILS.map((m, i) => (
                  <tr key={m} className={clsx('h-[25px] font-bold', i === 1 ? 'bg-[#cbe8d1]' : 'bg-[#b7d3bb]')}>
                    <td className="pb-0.5 pl-0.5 leading-5"><span className="flex items-center gap-2"><Envelope />{m}</span></td>
                    <td className="pb-0.5 pl-1.5 leading-5">Trading Platform</td>
                    <td className="pr-2 pb-0.5 text-right leading-5 whitespace-nowrap">2022.10.25 20:18</td>
                  </tr>
                ))}
              </tbody>
            </table>
          </div>
          <div className="flex w-5 flex-col items-center justify-between bg-[#f0f0f0] py-2">
            <Chevron />
            <span className="mt-1.5 mb-auto h-5 w-[18px] shrink-0 bg-[#cdcdcd]" />
            <Chevron down />
          </div>
        </div>
        <div className="flex h-[26px] border-t-2 border-black pl-[3px]">
          {TERMINAL_TABS.map(([name, count]) => {
            const active = name === '邮箱';
            return (
              <button
                key={name}
                type="button"
                className={clsx(
                  'flex shrink-0 items-center px-3 text-[15px] leading-5',
                  active ? '-mt-0.5 h-[26px] border border-t-0 border-b-2 border-black bg-[#c9e8cf]' : 'mt-px mb-1 text-[#777]',
                  !active && name !== '警报' && 'border-r border-[#888]'
                )}
              >
                {name}
                {count && <span className="mt-1.5 ml-0.5 text-[13px] leading-4 font-bold text-[#ee1c24]">{count}</span>}
              </button>
            );
          })}
        </div>
      </div>
    </section>
  );
}

function StatusBar() {
  return (
    <footer className="flex h-[30px] shrink-0 items-center border-t-2 border-[#a0a0a0] pt-0.5 pl-0.5 text-[15px] leading-6 [&>span]:border-l [&>span]:border-[#888] [&>span]:pl-[5px]">
      <p className="flex-1">寻求帮助,请按F1键</p>
      <span className="w-[156px]">Default</span>
      <span className="w-36">2022.06.09 19:00</span>
      <span className="w-[99px]">O: 17.23075</span>
      <span className="w-24">H: 17.23098</span>
      <span className="w-24">L: 16.57644</span>
      <span className="w-24">C: 16.84999</span>
      <span className="w-[90px]">V: 1277</span>
      <span className="flex w-[173px] items-center gap-1">
        <svg width="32" height="17" viewBox="0 0 32 17" aria-hidden="true">
          {[5, 6, 7, 8, 9, 11, 12, 13].map((h, i) => (
            <g key={i}>
              <rect x={i * 4} y="0" width="3" height={16 - h} fill="#7a8a1e" />
              <rect x={i * 4} y={17 - h} width="3" height={h} fill="#174a70" />
            </g>
          ))}
        </svg>
        4210/7 kb
      </span>
    </footer>
  );
}

function Shields() {
  return (
    <div className="pointer-events-none absolute inset-x-0 top-3 bottom-0 overflow-hidden">
      <svg className="h-full w-full" aria-hidden="true">
        {SHIELDS.map(([x, y]) => (
          <path
            key={`${x}-${y}`}
            transform={`translate(${x} ${y - 12})`}
            fill="#b2b2b2"
            fillOpacity=".42"
            fillRule="evenodd"
            d="M0 39C25 36 50 24 63 0C87 15 112 15 138 2C150 27 155 50 155 70C155 105 140 138 107 163C45 155 0 110 0 39ZM62 45L88 38L94 65L121 58L127 83L101 90L108 116L82 124L76 97L49 104L42 79L69 72Z"
          />
        ))}
      </svg>
    </div>
  );
}

export default function App() {
  return (
    <div className="relative flex h-screen min-h-[700px] flex-col overflow-hidden bg-[#f0f0f0] font-['Noto_Sans','Noto_Sans_CJK_SC',sans-serif] text-black">
      <header className="flex h-[29px] shrink-0 items-center bg-white pl-0.5">
        <span className="flex h-[19px] w-5 items-center justify-center bg-[#10202c] text-[10px] leading-3 font-bold text-white">J2T</span>
        <h1 className="ml-1 flex-1 pb-0.5 text-base leading-6">33340: Just2Trade-Real2 - Just2Trade Online Ltd - [USDTRY.c,H1]</h1>
        <div className="flex pr-1 [&>button]:flex [&>button]:w-[58px] [&>button]:justify-center">
          <button type="button" aria-label="最小化"><Svg w={14} h={14}><path d="M1 7.500h12" stroke="#000" /></Svg></button>
          <button type="button" aria-label="还原"><Svg w={14} h={14}><path d="M1.500 3.500h9v9h-9zM3.500 3V1.500h9v9H11" stroke="#000" /></Svg></button>
          <button type="button" aria-label="关闭"><Svg w={14} h={14}><path d="M1 1l12 12M13 1L1 13" stroke="#000" /></Svg></button>
        </div>
      </header>

      <nav className="flex h-[25px] shrink-0 items-center pl-[5px] text-[15px]">
        <WindowsIcon />
        <div className="ml-2.5 flex flex-1 gap-6 pb-0.5">
          {MENUS.map(([name, key]) => (
            <button key={key} type="button" className="leading-[22px]">
              {name}(<u>{key}</u>)
            </button>
          ))}
        </div>
        <div className="flex gap-px [&>button]:flex [&>button]:h-6 [&>button]:w-6 [&>button]:items-center [&>button]:justify-center [&>button]:bg-white">
          <button type="button" aria-label="最小化图表"><Svg w={10} h={10}><path d="M2 8.500h6" stroke="#555" strokeWidth="2" /></Svg></button>
          <button type="button" aria-label="还原图表"><Svg w={10} h={10}><path d="M1.500 5h5v4h-5zM3.500 4V1.500h5v4H7" stroke="#555" strokeWidth="1.5" /></Svg></button>
          <button type="button" aria-label="关闭图表"><Svg w={10} h={10}><path d="M2 2l6 6M8 2L2 8" stroke="#555" strokeWidth="2" /></Svg></button>
        </div>
      </nav>

      <Toolbar />

      <main className="flex min-h-0 flex-1">
        <aside className="mb-[5px] flex w-[332px] shrink-0 flex-col border-r-2 border-[#888]">
          <MarketWatch />
          <Navigator />
        </aside>
        <div className="flex min-w-0 flex-1 flex-col">
          <Chart />
          <ChartTabs />
        </div>
      </main>

      <Terminal />
      <StatusBar />
      <div className="flex h-[9px] shrink-0 justify-end overflow-hidden bg-linear-to-r from-[#2d3226] via-[#4a4038] to-[#2a1a1e] pt-1 pr-[98px] text-xs leading-3 text-white">20:50</div>

      <Shields />
    </div>
  );
}
